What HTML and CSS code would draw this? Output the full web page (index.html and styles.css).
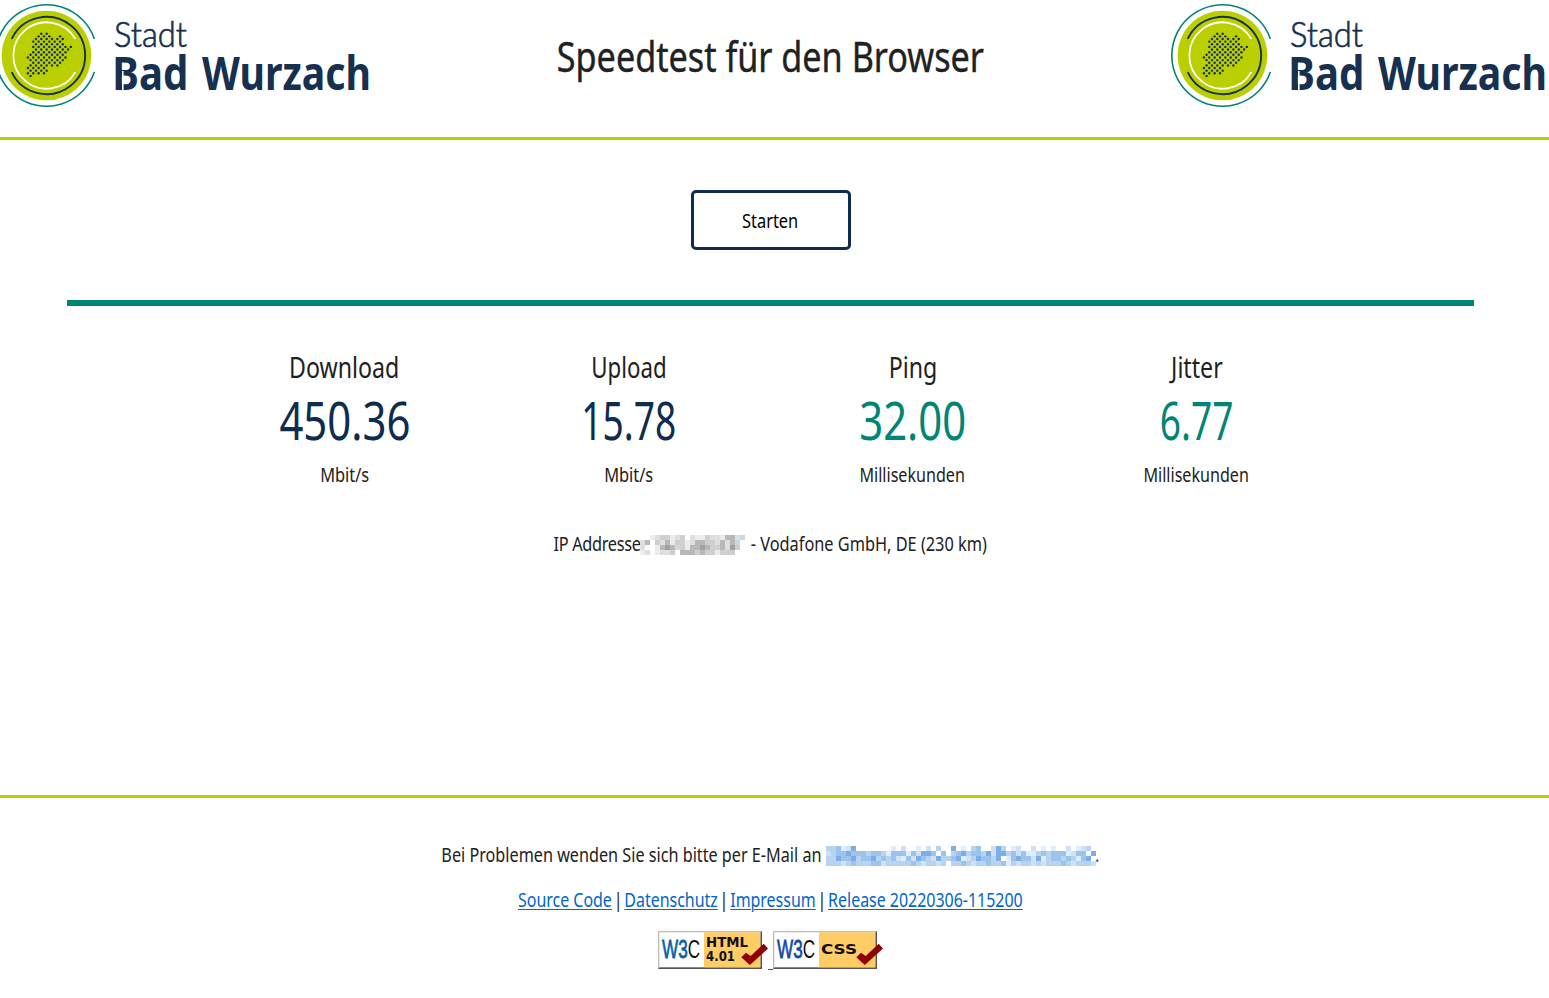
FILE: index.html
```html
<!DOCTYPE html>
<html lang="de">
<head>
<meta charset="utf-8">
<title>Speedtest für den Browser</title>
<link rel="stylesheet" href="styles.css">
</head>
<body>
<header class="header">
  <svg class="logo" viewBox="0 0 377 112">
    <g id="city-logo">
    <circle cx="51.5" cy="55.5" r="44.8" fill="#bacf00"/>
    <path d="M99.4 38.9A50.7 50.7 0 1 0 99.4 72.1" fill="none" stroke="#008575" stroke-width="1.6"/>
    <path d="M16.7 38.9A38.6 38.6 0 1 1 16.7 72.1" fill="none" stroke="#17304f" stroke-width="1.9"/>
    <path d="M80.3 38.9A33.2 33.2 0 1 0 80.3 72.1" fill="none" stroke="#fff" stroke-width="1.8"/>
    <g id="dots" fill="#17304f"></g>
    <text class="logo-top" x="119" y="46.5" textLength="73" lengthAdjust="spacingAndGlyphs">Stadt</text>
    <text class="logo-name" x="117.3" y="90" textLength="76" lengthAdjust="spacingAndGlyphs">Bad</text>
    <text class="logo-name" x="207" y="90" textLength="169" lengthAdjust="spacingAndGlyphs">Wurzach</text>
    <path d="M127.8 71v20" stroke="#fff" stroke-width="1.6"/>
    </g>
  </svg>
  <h1 class="title"><span class="fit fit-title">Speedtest für den Browser</span></h1>
  <svg class="logo" viewBox="0 0 377 112"><use href="#city-logo"/></svg>
</header>

<main class="main">
  <button class="start"><span class="fit fit-start">Starten</span></button>
  <div class="progress"></div>
  <section class="metrics">
    <div class="metric"><h2><span class="fit fit-label">Download</span></h2><div class="value"><span class="fit fit-value">450.36</span></div><div class="unit"><span class="fit fit-text">Mbit/s</span></div></div>
    <div class="metric"><h2><span class="fit fit-label tight">Upload</span></h2><div class="value"><span class="fit fit-value narrow">15.78</span></div><div class="unit"><span class="fit fit-text">Mbit/s</span></div></div>
    <div class="metric teal"><h2><span class="fit fit-label">Ping</span></h2><div class="value"><span class="fit fit-value">32.00</span></div><div class="unit"><span class="fit fit-text long">Millisekunden</span></div></div>
    <div class="metric teal"><h2><span class="fit fit-label">Jitter</span></h2><div class="value"><span class="fit fit-value narrow">6.77</span></div><div class="unit"><span class="fit fit-text long">Millisekunden</span></div></div>
  </section>
  <p class="line ip"><span class="fit fit-ip"><span class="ip-label">IP Addresse</span><svg class="mosaic mosaic-ip" id="ip-mosaic" viewBox="0 0 106 20" preserveAspectRatio="none" shape-rendering="crispEdges"></svg> - Vodafone GmbH, DE (230 km)</span></p>
</main>

<footer class="footer">
  <p class="line contact"><span class="fit fit-contact">Bei Problemen wenden Sie sich bitte per E-Mail an <svg class="mosaic mosaic-mail" id="mail-mosaic" viewBox="0 0 271 20" preserveAspectRatio="none" shape-rendering="crispEdges"></svg><span class="link-dot">.</span></span></p>
  <p class="line links"><span class="fit fit-links"><a href="#">Source Code</a> <span class="sep">|</span> <a href="#">Datenschutz</a> <span class="sep">|</span> <a href="#">Impressum</a> <span class="sep">|</span> <a href="#">Release 20220306-115200</a></span></p>
  <div class="badges">
    <svg class="badge" viewBox="0 0 110 38">
      <rect width="104" height="38" fill="#555"/><path d="M0 0H104L102 2H2V36L0 38Z" fill="#bbb"/>
      <rect x="1.3" y="1.3" width="101" height="35" fill="#fff"/><rect x="46" y="1.3" width="56.3" height="35" fill="#ffcc66"/>
      <text class="w3 html" x="4" y="27" textLength="38" lengthAdjust="spacingAndGlyphs">W3<tspan class="w3c">C</tspan></text>
      <text class="kind" x="48" y="16" textLength="42" lengthAdjust="spacingAndGlyphs">HTML</text>
      <text class="kind" x="48" y="30" textLength="29" lengthAdjust="spacingAndGlyphs">4.01</text>
      <path d="M83.3 26.3L88 21.8L92.7 25L105.7 12.7L110 17.5L91.8 34Z" fill="#900000"/>
    </svg>
    <a class="badge-gap" href="#" aria-label="W3C"></a>
    <svg class="badge" viewBox="0 0 110 38">
      <rect width="104" height="38" fill="#555"/><path d="M0 0H104L102 2H2V36L0 38Z" fill="#bbb"/>
      <rect x="1.3" y="1.3" width="101" height="35" fill="#fff"/><rect x="46" y="1.3" width="56.3" height="35" fill="#ffcc66"/>
      <text class="w3 css" x="4" y="27" textLength="38" lengthAdjust="spacingAndGlyphs">W3<tspan class="w3c">C</tspan></text>
      <text class="kind" x="48" y="23" textLength="36" lengthAdjust="spacingAndGlyphs">CSS</text>
      <path d="M83.3 26.3L88 21.8L92.7 25L105.7 12.7L110 17.5L91.8 34Z" fill="#900000"/>
    </svg>
  </div>
</footer>
<script src="script.js"></script>
</body>
</html>
```
FILE: styles.css
```css
body { margin: 0; background: #fff; color: #212121; font-family: "Noto Sans", sans-serif; font-size: 20.5px; overflow: hidden; }
.header { display: flex; width: 1552px; height: 137px; margin-left: -5px; border-bottom: 3px solid #bacf00; padding-right: 2px; }
.logo { width: 377px; height: 112px; flex: none; }
.header .logo:last-child { margin-left: -1px; }
.logo-top { font-family: Lato, sans-serif; font-weight: 300; font-size: 36px; fill: #17304f; stroke: #17304f; stroke-width: .7px; }
.logo-name { font-family: "Noto Sans", sans-serif; font-weight: 700; font-size: 46px; fill: #17304f; }
.title { display: flex; justify-content: center; box-sizing: border-box; flex: none; width: 800px; margin: 0; padding-right: 3px; height: 110px; align-items: center; font-size: 42px; font-weight: 400; }
.fit { display: inline-block; white-space: nowrap; flex: none; transform-origin: center; }
.fit-title { transform: scaleX(.814); -webkit-text-stroke: .4px; }
.fit-start { transform: scaleX(.8); }
.fit-label { transform: scaleX(.785); }
.fit-label.tight { transform: scaleX(.755); }
.fit-value { transform: scaleX(.79); }
.fit-value.narrow { transform: scaleX(.7); }
.fit-text { transform: scaleX(.8); }
.fit-text.long { transform: scaleX(.785); }
.fit-ip { transform: scaleX(.796); }
.ip-label { letter-spacing: -.4px; }
.fit-contact { transform: scaleX(.79); }
.fit-links { transform: scaleX(.778); }
.main { display: flex; flex-direction: column; align-items: center; box-sizing: border-box; width: 1541px; height: 655px; padding-top: 50px; }
.start { display: flex; align-items: center; justify-content: center; box-sizing: border-box; width: 160px; height: 60px; padding: 0; border: 3px solid #0d2c4f; border-radius: 5px; background: #fff; color: #000; font: inherit; }
.progress { width: 1407px; height: 6px; margin-top: 50px; background: #008575; }
.metrics { display: grid; grid-template-columns: repeat(4, 284px); margin-top: 40px; }
.metric { display: flex; flex-direction: column; align-items: center; color: #0d2c4f; }
.metric.teal { color: #008575; }
.metric h2 { display: flex; margin: 0; height: 40px; align-items: center; color: #212121; font-weight: 400; font-size: 29.5px; }
.value { display: flex; align-items: center; height: 66px; font-size: 53px; }
.unit { display: flex; align-items: center; height: 44px; color: #212121; }
.line { display: flex; justify-content: center; align-items: center; height: 40px; margin: 0; line-height: 28px; }
.ip { margin-top: 27px; }
.mosaic { height: 20px; vertical-align: -4px; }
.mosaic-ip { width: 133px; }
.mosaic-mail { width: 343px; }
.footer { display: flex; flex-direction: column; align-items: center; width: 1541px; position: relative; padding-top: 39px; }
.footer::before { content: ""; position: absolute; left: 0; top: 0; width: 1549px; height: 3px; background: #bacf00; }
.links { margin-top: 5px; }
.links a, .link-dot { color: #0066cc; }
.link-dot { margin: 0 -1px 0 -2px; }
.links a { text-decoration-thickness: 1px; text-underline-offset: 2px; }
.sep { margin: 0 -3px; }
.badges { display: flex; align-items: flex-start; margin-top: 12px; }
.badge { width: 110px; height: 38px; }
.badge-gap { width: 5px; height: 38px; border-bottom: 1px solid #0066cc; }
.w3 { font-family: "Liberation Sans", sans-serif; font-size: 26px; stroke-width: .8px; }
.w3.html { fill: #0b61a4; stroke: #0b61a4; }
.w3.css { fill: #1149a8; stroke: #1149a8; }
.w3 .w3c { fill: #111; stroke: none; }
.kind { font-family: "DejaVu Sans", sans-serif; font-weight: 700; font-size: 13.5px; fill: #111; }
```
FILE: script.js
```js
const NS = "http://www.w3.org/2000/svg";
function add(parent, tag, attrs) {
  const el = document.createElementNS(NS, tag);
  for (const key in attrs) el.setAttribute(key, attrs[key]);
  parent.appendChild(el);
}
// Each run: row number, first column, last column of the dotted district map.
const runs = [[0,5,7],[1,4,8],[1,12,12],[2,3,9],[2,11,13],[3,2,12],[4,3,13],[5,2,16],[6,3,15],[7,2,14],[8,1,13],[9,0,14],[10,1,13],[11,2,12],[12,1,11],[13,0,6],[14,1,7],[15,0,6],[16,1,1]];
const dots = document.getElementById("dots");
for (const [row, from, to] of runs)
  for (let col = from; col <= to; col++)
    if ((row + col) % 2 === 1) add(dots, "circle", { cx: 32.9 + col * 2.68, cy: 33.7 + row * 2.64, r: 1.2 });

function mosaic(id, rows, palette) {
  const svg = document.getElementById(id);
  rows.forEach((line, y) => [...line].forEach((c, x) => {
    if (palette[c]) add(svg, "rect", { x: x * 5, y: y * 5, width: 5, height: 5, fill: palette[c] });
  }));
}
mosaic("ip-mosaic", [
  "..1233123.2113221442a",
  "24.3241331244332424a.",
  "2..1454a314454334253.",
  "12.1223.44434331333.."
], { 1: "#eeece9", 2: "#dedfe1", 3: "#cfcfcf", 4: "#b8b8b8", 5: "#a3a19f", a: "#c9d8e5" });
mosaic("mail-mosaic", [
  "334125.......1.2..1.2.3..5.1.34..253.12..2.1.1..2.123.",
  "2344544434431444142554.4.345344352553424113434441244.5",
  "33544534453434214254325334512354435.14544251344343145.",
  "333234333442333334323323.33432334334132332323334323332"
], { 1: "#dceeff", 2: "#d0e1f5", 3: "#b8d3f0", 4: "#9bc4ec", 5: "#7eafe4" });
```
